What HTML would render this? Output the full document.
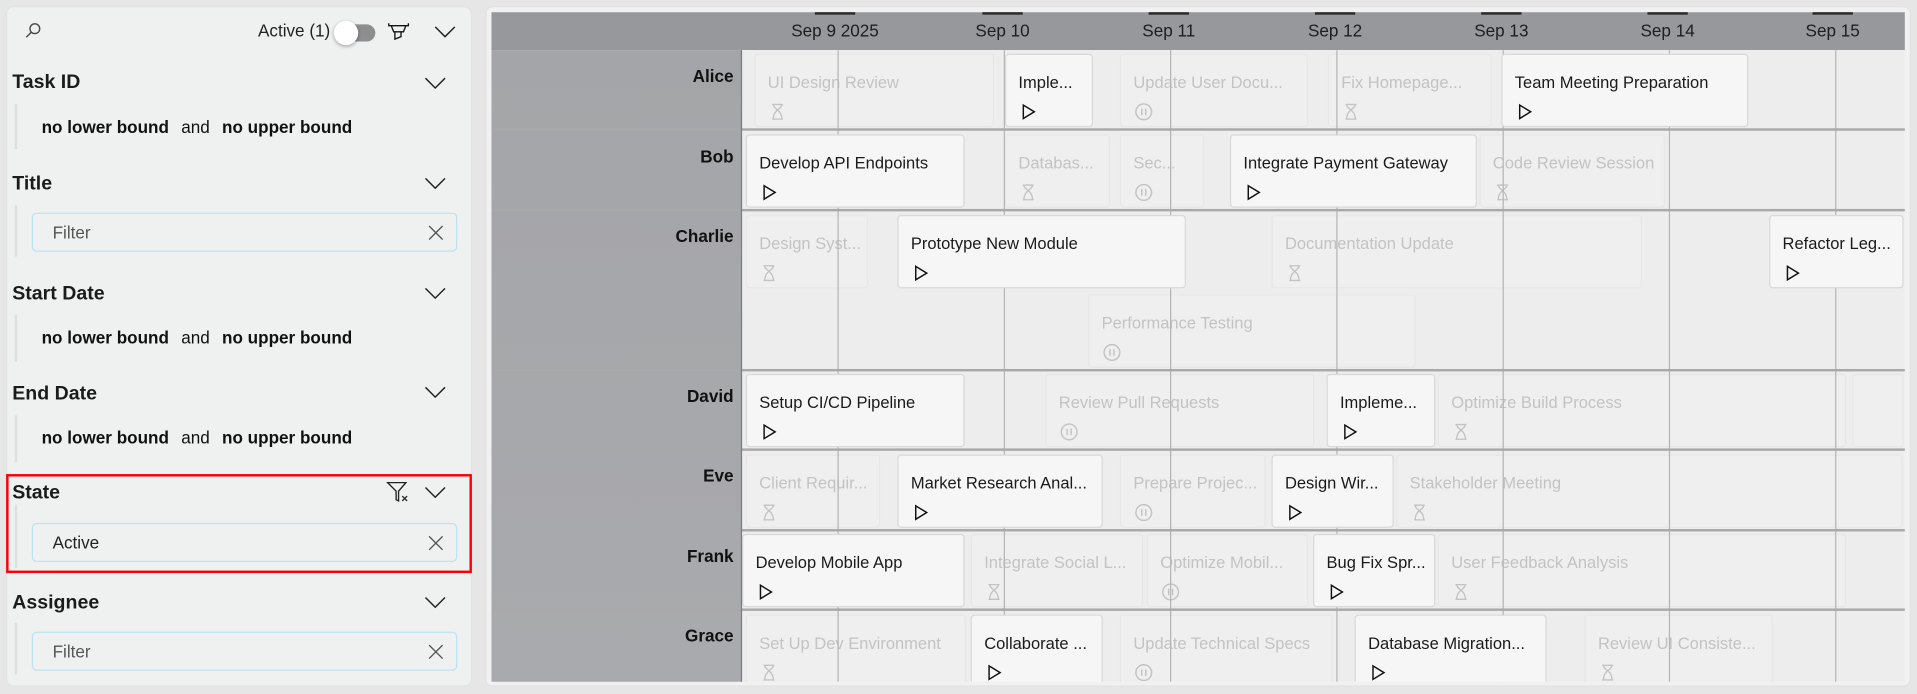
<!DOCTYPE html>
<html><head><meta charset="utf-8"><style>
*{box-sizing:border-box;margin:0;padding:0}
html,body{width:1917px;height:694px;overflow:hidden;background:#e6e6e6;font-family:"Liberation Sans",sans-serif}
#s{position:absolute;left:0;top:0;width:1568px;height:568px;transform:scale(1.2226,1.2218);transform-origin:0 0;background:#e6e6e6}
.a{position:absolute}
.lp{left:5px;top:5px;width:381px;height:557px;background:#eff1f0;border-radius:6px;border:1px solid #e2e4e3}
.h{position:absolute;left:10px;font-size:16px;font-weight:bold;color:#1b1b1b}
.chev{position:absolute;left:347px;width:18px;height:10px}
.vl{position:absolute;left:12px;width:2px;background:#dedfdf}
.b{position:absolute;left:34px;font-size:14px;color:#111}
.b b{font-weight:bold}
.b span{margin:0 10px;font-weight:normal}
.in{position:absolute;left:26px;width:348px;height:32px;border:1px solid #bfe2f0;border-radius:4px;font-size:14px;line-height:30px;padding-left:16px;color:#555}
.in svg{position:absolute;right:10px;top:9px}
.rp{left:397px;top:5px;width:1166px;height:557px;background:#f1f1f1;border-radius:6px;border:1px solid #e2e2e2}
.hd{left:402px;top:10px;width:1156px;height:31px;background:#97989c}
.dl{position:absolute;top:10px;font-size:14px;color:#1e1e1e;line-height:31px;transform:translateX(-50%);white-space:nowrap}
.tk{position:absolute;top:10px;width:33px;height:2px;background:#2a2a2a;transform:translateX(-50%)}
.lc{left:402px;top:41px;width:205px;height:517px;background:linear-gradient(#a4a5a8,#a9aaad)}
.gr{left:607px;top:41px;width:951px;height:517px;background:#ededed;overflow:hidden}
.nm{position:absolute;right:968px;font-size:14px;font-weight:bold;color:#111;text-align:right}
.hl{position:absolute;left:402px;width:1156px;height:2px;background:#a9a9aa;z-index:4}
.gl{position:absolute;top:0;width:1px;height:517px;background:#b5b5b5;z-index:2}
.c{position:absolute;height:60px;border-radius:3px;padding-left:10px;overflow:hidden;white-space:nowrap;font-size:13.5px}
.c .t{position:absolute;left:10px;top:13px;line-height:20px}
.c svg{position:absolute;left:11px;top:39px}
.f{background:#eeefee;border:1px solid #e6e7e6;color:#c3c3c3;z-index:1}
.ac{background:#f6f6f6;border:1px solid #d9d9d9;color:#1a1a1a;z-index:3}
</style></head><body><div id="s">
<div class="a lp"></div>
<svg class="a" style="left:20px;top:18px" width="14" height="14" viewBox="0 0 14 14" fill="none" stroke="#444" stroke-width="1.1"><circle cx="8.5" cy="5.5" r="4"/><path d="M5.6 8.4L1.5 12.5"/></svg>
<div class="a" style="left:211px;top:17px;font-size:14px;color:#222">Active (1)</div>
<div class="a" style="left:275px;top:20px;width:32px;height:14px;border-radius:7px;background:#8e8e90"></div>
<div class="a" style="left:273px;top:17px;width:20px;height:20px;border-radius:10px;background:#fff;box-shadow:0 1px 3px rgba(0,0,0,.35)"></div>
<svg class="a" style="left:317px;top:18px" width="18" height="16" viewBox="0 0 18 16" fill="none" stroke="#111" stroke-width="1.1"><path d="M1 1v2h16V1M3 3l2 5h8l2-5M6 8v6l5-2V8"/></svg>
<svg class="a" style="left:355px;top:21px" width="18" height="10" viewBox="0 0 18 10" fill="none" stroke="#222" stroke-width="1.2"><path d="M1 1l8 8 8-8"/></svg>

<div class="h" style="top:59px">Task ID</div>
<svg class="chev" style="top:63px" viewBox="0 0 18 10" fill="none" stroke="#222" stroke-width="1.2"><path d="M1 1l8 8 8-8"/></svg>
<div class="vl" style="top:85px;height:37px"></div>
<div class="b" style="top:96px"><b>no lower bound</b><span>and</span><b>no upper bound</b></div>

<div class="h" style="top:142px">Title</div>
<svg class="chev" style="top:145px" viewBox="0 0 18 10" fill="none" stroke="#222" stroke-width="1.2"><path d="M1 1l8 8 8-8"/></svg>
<div class="vl" style="top:168px;height:42px"></div>
<div class="in" style="top:174px">Filter<svg width="13" height="13" viewBox="0 0 13 13" stroke="#555" stroke-width="1.1"><path d="M1 1l11 11M12 1L1 12"/></svg></div>

<div class="h" style="top:232px">Start Date</div>
<svg class="chev" style="top:235px" viewBox="0 0 18 10" fill="none" stroke="#222" stroke-width="1.2"><path d="M1 1l8 8 8-8"/></svg>
<div class="vl" style="top:258px;height:38px"></div>
<div class="b" style="top:268px"><b>no lower bound</b><span>and</span><b>no upper bound</b></div>

<div class="h" style="top:314px">End Date</div>
<svg class="chev" style="top:316px" viewBox="0 0 18 10" fill="none" stroke="#222" stroke-width="1.2"><path d="M1 1l8 8 8-8"/></svg>
<div class="vl" style="top:340px;height:38px"></div>
<div class="b" style="top:350px"><b>no lower bound</b><span>and</span><b>no upper bound</b></div>

<div class="a" style="left:5px;top:388px;width:381px;height:81px;border:2px solid #f00"></div>
<div class="h" style="top:395px">State</div>
<svg class="a" style="left:316px;top:394px" width="20" height="18" viewBox="0 0 20 18" fill="none" stroke="#222" stroke-width="1.1"><path d="M1 1h15l-6 7v8l-2-1V8z"/><path d="M13 12l4 4M17 12l-4 4"/></svg>
<svg class="chev" style="top:398px" viewBox="0 0 18 10" fill="none" stroke="#222" stroke-width="1.2"><path d="M1 1l8 8 8-8"/></svg>
<div class="vl" style="top:413px;height:52px"></div>
<div class="in" style="top:428px;color:#222">Active<svg width="13" height="13" viewBox="0 0 13 13" stroke="#555" stroke-width="1.1"><path d="M1 1l11 11M12 1L1 12"/></svg></div>

<div class="h" style="top:485px">Assignee</div>
<svg class="chev" style="top:488px" viewBox="0 0 18 10" fill="none" stroke="#222" stroke-width="1.2"><path d="M1 1l8 8 8-8"/></svg>
<div class="vl" style="top:510px;height:42px"></div>
<div class="in" style="top:517px">Filter<svg width="13" height="13" viewBox="0 0 13 13" stroke="#555" stroke-width="1.1"><path d="M1 1l11 11M12 1L1 12"/></svg></div>

<div class="a rp"></div>
<div class="a hd"></div>
<div class="tk" style="left:683px"></div><div class="dl" style="left:683px">Sep 9 2025</div>
<div class="tk" style="left:820px"></div><div class="dl" style="left:820px">Sep 10</div>
<div class="tk" style="left:956px"></div><div class="dl" style="left:956px">Sep 11</div>
<div class="tk" style="left:1092px"></div><div class="dl" style="left:1092px">Sep 12</div>
<div class="tk" style="left:1228px"></div><div class="dl" style="left:1228px">Sep 13</div>
<div class="tk" style="left:1364px"></div><div class="dl" style="left:1364px">Sep 14</div>
<div class="tk" style="left:1499px"></div><div class="dl" style="left:1499px">Sep 15</div>
<div class="a lc"></div>
<div class="nm" style="top:54px">Alice</div>
<div class="nm" style="top:120px">Bob</div>
<div class="nm" style="top:185px">Charlie</div>
<div class="nm" style="top:316px">David</div>
<div class="nm" style="top:381px">Eve</div>
<div class="nm" style="top:447px">Frank</div>
<div class="nm" style="top:512px">Grace</div>
<div class="a" style="left:606px;top:41px;width:1px;height:517px;background:#7c7c7e;z-index:5"></div>

<svg width="0" height="0" style="position:absolute"><defs>
<symbol id="p" viewBox="0 0 14 14"><path d="M3 1.5L12 7 3 12.5z" fill="none" stroke="#111" stroke-width="1.2"/></symbol>
<symbol id="g" viewBox="0 0 14 14"><path d="M2.5 1h9M2.5 13h9M3.5 1c0 4 7 4 7 12M10.5 1c0 4-7 4-7 12" fill="none" stroke="#c3c3c3" stroke-width="1.1"/></symbol>
<symbol id="u" viewBox="0 0 14 14"><circle cx="7" cy="7" r="6" fill="none" stroke="#c3c3c3" stroke-width="1.1"/><path d="M5.5 4.5v5M8.5 4.5v5" stroke="#c3c3c3" stroke-width="1.1"/></symbol>
</defs></svg>

<div class="a gr">
<div class="gl" style="left:78px"></div><div class="gl" style="left:214px"></div><div class="gl" style="left:350px"></div><div class="gl" style="left:486px"></div><div class="gl" style="left:622px"></div><div class="gl" style="left:758px"></div><div class="gl" style="left:894px"></div>

<div class="c f" style="left:10px;top:3px;width:196px"><div class="t">UI Design Review</div><svg width="14" height="15"><use href="#g"/></svg></div>
<div class="c ac" style="left:215px;top:3px;width:72px"><div class="t">Imple...</div><svg width="14" height="15"><use href="#p"/></svg></div>
<div class="c f" style="left:309px;top:3px;width:154px"><div class="t">Update User Docu...</div><svg width="15" height="15"><use href="#u"/></svg></div>
<div class="c f" style="left:479px;top:3px;width:134px"><div class="t">Fix Homepage...</div><svg width="14" height="15"><use href="#g"/></svg></div>
<div class="c ac" style="left:621px;top:3px;width:202px"><div class="t">Team Meeting Preparation</div><svg width="14" height="15"><use href="#p"/></svg></div>

<div class="c ac" style="left:3px;top:69px;width:179px"><div class="t">Develop API Endpoints</div><svg width="14" height="15"><use href="#p"/></svg></div>
<div class="c f" style="left:215px;top:69px;width:86px"><div class="t">Databas...</div><svg width="14" height="15"><use href="#g"/></svg></div>
<div class="c f" style="left:309px;top:69px;width:69px"><div class="t">Sec...</div><svg width="15" height="15"><use href="#u"/></svg></div>
<div class="c ac" style="left:399px;top:69px;width:202px"><div class="t">Integrate Payment Gateway</div><svg width="14" height="15"><use href="#p"/></svg></div>
<div class="c f" style="left:603px;top:69px;width:152px"><div class="t">Code Review Session</div><svg width="14" height="15"><use href="#g"/></svg></div>

<div class="c f" style="left:3px;top:135px;width:100px"><div class="t">Design Syst...</div><svg width="14" height="15"><use href="#g"/></svg></div>
<div class="c ac" style="left:127px;top:135px;width:236px"><div class="t">Prototype New Module</div><svg width="14" height="15"><use href="#p"/></svg></div>
<div class="c f" style="left:433px;top:135px;width:303px"><div class="t">Documentation Update</div><svg width="14" height="15"><use href="#g"/></svg></div>
<div class="c ac" style="left:840px;top:135px;width:110px"><div class="t">Refactor Leg...</div><svg width="14" height="15"><use href="#p"/></svg></div>
<div class="c f" style="left:283px;top:200px;width:268px"><div class="t">Performance Testing</div><svg width="15" height="15"><use href="#u"/></svg></div>

<div class="c ac" style="left:3px;top:265px;width:179px"><div class="t">Setup CI/CD Pipeline</div><svg width="14" height="15"><use href="#p"/></svg></div>
<div class="c f" style="left:248px;top:265px;width:220px"><div class="t">Review Pull Requests</div><svg width="15" height="15"><use href="#u"/></svg></div>
<div class="c ac" style="left:478px;top:265px;width:89px"><div class="t">Impleme...</div><svg width="14" height="15"><use href="#p"/></svg></div>
<div class="c f" style="left:569px;top:265px;width:334px"><div class="t">Optimize Build Process</div><svg width="14" height="15"><use href="#g"/></svg></div>
<div class="c f" style="left:908px;top:265px;width:42px"></div>

<div class="c f" style="left:3px;top:331px;width:110px"><div class="t">Client Requir...</div><svg width="14" height="15"><use href="#g"/></svg></div>
<div class="c ac" style="left:127px;top:331px;width:168px"><div class="t">Market Research Anal...</div><svg width="14" height="15"><use href="#p"/></svg></div>
<div class="c f" style="left:309px;top:331px;width:119px"><div class="t">Prepare Projec...</div><svg width="15" height="15"><use href="#u"/></svg></div>
<div class="c ac" style="left:433px;top:331px;width:100px"><div class="t">Design Wir...</div><svg width="14" height="15"><use href="#p"/></svg></div>
<div class="c f" style="left:535px;top:331px;width:414px"><div class="t">Stakeholder Meeting</div><svg width="14" height="15"><use href="#g"/></svg></div>

<div class="c ac" style="left:0px;top:396px;width:182px"><div class="t">Develop Mobile App</div><svg width="14" height="15"><use href="#p"/></svg></div>
<div class="c f" style="left:187px;top:396px;width:141px"><div class="t">Integrate Social L...</div><svg width="14" height="15"><use href="#g"/></svg></div>
<div class="c f" style="left:331px;top:396px;width:132px"><div class="t">Optimize Mobil...</div><svg width="15" height="15"><use href="#u"/></svg></div>
<div class="c ac" style="left:467px;top:396px;width:100px"><div class="t">Bug Fix Spr...</div><svg width="14" height="15"><use href="#p"/></svg></div>
<div class="c f" style="left:569px;top:396px;width:334px"><div class="t">User Feedback Analysis</div><svg width="14" height="15"><use href="#g"/></svg></div>

<div class="c f" style="left:3px;top:462px;width:180px"><div class="t">Set Up Dev Environment</div><svg width="14" height="15"><use href="#g"/></svg></div>
<div class="c ac" style="left:187px;top:462px;width:108px"><div class="t">Collaborate ...</div><svg width="14" height="15"><use href="#p"/></svg></div>
<div class="c f" style="left:309px;top:462px;width:174px"><div class="t">Update Technical Specs</div><svg width="15" height="15"><use href="#u"/></svg></div>
<div class="c ac" style="left:501px;top:462px;width:157px"><div class="t">Database Migration...</div><svg width="14" height="15"><use href="#p"/></svg></div>
<div class="c f" style="left:689px;top:462px;width:154px"><div class="t">Review UI Consiste...</div><svg width="14" height="15"><use href="#g"/></svg></div>
</div>

<div class="hl" style="top:105px"></div>
<div class="hl" style="top:171px"></div>
<div class="hl" style="top:302px"></div>
<div class="hl" style="top:367px"></div>
<div class="hl" style="top:433px"></div>
<div class="hl" style="top:498px"></div>
</div></body></html>
